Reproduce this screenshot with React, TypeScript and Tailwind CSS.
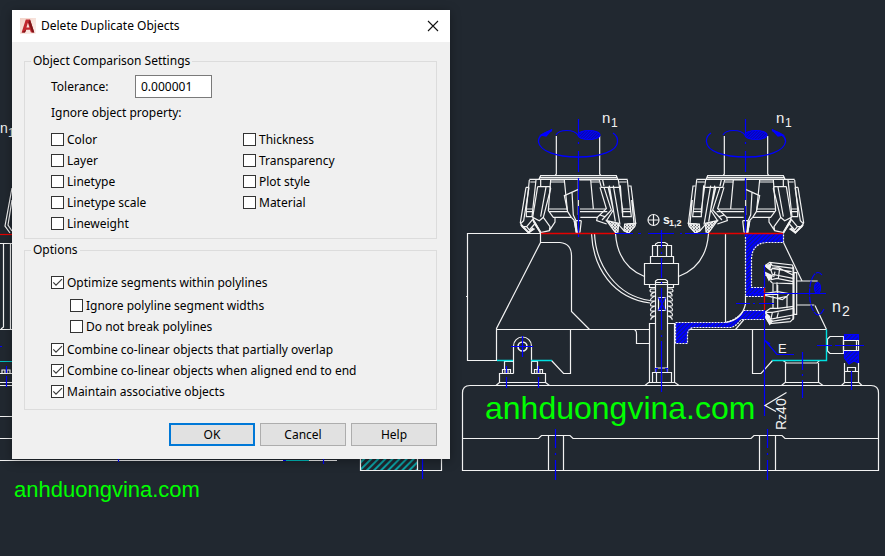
import { useState } from "react"
import type { ReactNode } from "react"

type CheckOptionProps = {
  label: string
  checked?: boolean
  nested?: boolean
}

const leftProperties = ["Color", "Layer", "Linetype", "Linetype scale", "Lineweight"]
const rightProperties = ["Thickness", "Transparency", "Plot style", "Material"]

function CheckOption({ label, checked = false, nested = false }: CheckOptionProps) {
  const [on, setOn] = useState(checked)

  return (
    <label className={nested ? "ml-[19px] flex h-[21px] items-center gap-[3px]" : "flex h-[21px] items-center gap-[3px]"}>
      <span className="grid size-[13px] shrink-0">
        <input
          type="checkbox"
          checked={on}
          onChange={(event) => setOn(event.target.checked)}
          className="peer col-start-1 row-start-1 size-[13px] appearance-none border border-[#333] bg-white"
        />
        <svg
          aria-hidden="true"
          viewBox="0 0 13 13"
          className="pointer-events-none invisible col-start-1 row-start-1 size-[13px] peer-checked:visible"
        >
          <path d="M2.3 6.4 5 9.2 11 3.2" fill="none" stroke="#3a3a3a" strokeWidth="1.2" />
        </svg>
      </span>
      <span className="whitespace-nowrap">{label}</span>
    </label>
  )
}

function Group({ title, children }: { title: string; children: ReactNode }) {
  return (
    <fieldset className="min-w-0 border border-[#dcdcdc]">
      <legend className="ml-1.5 px-0.5 leading-4">{title}</legend>
      {children}
    </fieldset>
  )
}

function AppLogo() {
  return (
    <svg aria-hidden="true" viewBox="0 0 16 16" className="size-4">
      <defs>
        <linearGradient id="logo-bg" x1="0" y1="0" x2="1" y2="1">
          <stop offset="0" stopColor="#f3d3c8" />
          <stop offset="1" stopColor="#fbf1ee" />
        </linearGradient>
      </defs>
      <rect width="16" height="16" fill="url(#logo-bg)" />
      <path d="M1.6 14.4 5.8 1.6H10l4.3 12.8h-3.4l-.9-2.6H6.2l-1.2 2.6z" fill="#c1272d" />
      <path d="M7.9 4.8 6.4 9.4h3z" fill="#f7e1da" />
      <path d="M1.6 14.4 6.2 11.8 5 14.4zM10 1.6l4.3 12.8h-2L8.4 4.2z" fill="#7d1518" />
    </svg>
  )
}

// Milling head seen from the front, drawn at three units per screen unit.
function MillingHead() {
  return (
    <g transform="translate(500 100) scale(.33333)" strokeWidth="3.6">
      <path d="M169 108V222L165 227M299 108V222L303 227" />
      <path d="M117 237 122 227H349L353 237M118 233H353M88 238H383" />
      <path d="M88 240 79 328V350H98M108 240 96 350M91 246H106" />
      <path d="M78 262H87M78 262 61 368 66 380 86 398 104 386M87 262 71 362 61 372M66 380 80 380 98 358M80 380 88 390 104 372" />
      <path d="M79 327H98M79 335H97" />
      <path d="M113 260H150L152 266 130 352 118 362 98 352 113 260M138 261 122 350M98 352 104 372 122 398M104 366 122 398 148 392 165 366V352M130 352 150 380 148 392" />
      <path d="M122 240V259M152 240H193L202 330M153 246H192M152 240 145 332 160 352H213M145 327H200M148 335H202" />
      <path d="M235 268 193 287 203 335 214 352 222 360 229 398 240 396 244 362M216 276 220 345 228 362H244M228 362 231 396M235 240V345" />
      <path d="M238 240H298M273 246H298M272 240 280 326M240 327H318M240 335H322M241 352H292" />
      <path d="M298 240 304 262H360M300 262 319 326 292 352 290 362 320 372M312 262 334 330 306 360M324 260 340 330 318 364M300 345 314 350M340 257 360 374M328 257 346 365" />
      <path d="M308 240 312 258M355 240 368 328V350H394L382 240M358 246H380M368 327H392M368 335H393M361 256 367 340" />
      <path d="M385 258H393L407 370 404 378 386 398 372 392 356 374M395 300 402 370M382 372 407 370" />
      <path d="M320 362 356 370 354 396 346 398zM374 372 407 370 404 380 386 399 372 392z" fill="url(#grit)" />
      <path d="M63 374 86 398 100 384M98 358 122 398M224 362 230 398" strokeWidth="6" />
    </g>
  )
}

function SideMillingHead() {
  return (
    <g transform="translate(665 225) scale(.33333)" strokeWidth="3.6">
      <path d="M387 143H395V268H387zM384 125V285M395 168H458M395 240H448" />
      <path d="M300 122 314 112 382 120 386 130V160H378M314 112 322 122 386 130M320 130 380 140M300 122 318 136 322 130 340 128 384 150M318 136 322 148 384 160" />
      <path d="M300 150 320 156 318 164 336 160 384 170M316 168 322 174 384 176M336 172V200M324 174V200M330 140 326 156M344 130 340 160" />
      <path d="M300 205 338 200 372 206 366 214 338 220 300 211M300 208H338M338 180V250M338 220 352 224 366 214M324 212V250M366 214V250" />
      <path d="M300 262 316 250 338 250 386 244M300 262 322 262 386 250M304 270 318 282 384 270M322 262 318 282M300 276 314 296 376 290 386 280V250M316 290 376 280M340 262 336 278" />
      <path d="M300 122 318 118 314 134zM300 142 322 152 312 166zM300 262 314 274 310 282zM300 272 322 288 314 298z" fill="currentColor" />
    </g>
  )
}

function ShaftRotation() {
  return (
    <g stroke="#0000ff" strokeWidth="1.3">
      <path d="M552 130.500C542 133 538 137 538.500 142 540 151 556 157 578 157 601 157 617 151 617.500 142 618 138 616 135 613 133" />
      <path d="M541 135 552 129.500 546 136z" fill="#0000ff" />
    </g>
  )
}

function ShaftBreak({ x }: { x: number }) {
  return (
    <g transform={`translate(${x} 0)`} stroke="#0000ff">
      <path d="M-22 135C-19 129-4 129 0 135" />
      <ellipse cx="11" cy="135" rx="11" ry="4.500" fill="url(#hatch-shaft)" />
      <path d="M.5 119V133M.5 142V144M.5 151V172M.5 178V200M.5 206V237" />
    </g>
  )
}

function Drawing() {
  return (
    <svg
      aria-hidden="true"
      viewBox="0 0 885 556"
      preserveAspectRatio="xMinYMin slice"
      className="absolute inset-0 h-full w-full text-[#f2f2f2]"
      fill="none"
      stroke="currentColor"
      strokeWidth="1.2"
    >
      <defs>
        <pattern id="hatch-shaft" width="2" height="2" patternUnits="userSpaceOnUse" patternTransform="rotate(45)">
          <rect width="2" height="2" fill="#0a0aa0" stroke="none" />
          <path d="M.5 0V2" stroke="#0000ff" strokeWidth="1" />
        </pattern>
        <pattern id="hatch-blue" width="3" height="3" patternUnits="userSpaceOnUse" patternTransform="rotate(45)">
          <rect width="3" height="3" fill="#10188c" stroke="none" />
          <path d="M1 0V3" stroke="#0000ff" strokeWidth="2" />
        </pattern>
        <pattern id="hatch-cyan" width="5" height="5" patternUnits="userSpaceOnUse" patternTransform="rotate(45)">
          <path d="M2 0V5" stroke="#00e5e5" strokeWidth="1.3" />
        </pattern>
        <pattern id="grit" width="9" height="9" patternUnits="userSpaceOnUse">
          <rect width="9" height="9" fill="#f2f2f2" stroke="none" />
          <path d="M1 1H4V4H1zM6 5H9V8H6z" fill="#212830" stroke="none" />
        </pattern>
      </defs>

      {/* bed */}
      <path d="M462.500 470.500V393Q462.500 385.500 470 385.500H871Q878.500 385.500 878.500 393V470.500z" />
      <path d="M462.500 438.500H538.500L541.500 435.500H570L573 438.500H751L754 435.500H782L785 438.500H878.500" />
      <path d="M548.500 435.500V470.500M563.500 435.500V470.500M759.500 435.500V470.500M775.500 435.500V470.500" />

      {/* left pedestal */}
      <path d="M541 233.500H467.500V360.500H497M466 296.500H468M540.500 233.500V242.500L496.500 328.500V360.500" />
      <path d="M540.500 242.500H560Q571.500 243.500 571.500 256V311.500L589.500 329.500M496.500 329.500H649.500" />
      <path d="M570.500 329.500V373.500H563.500L551.500 360.500M634 329.500Q636.500 330 636.500 334V343.500H649.500" />
      <path d="M513.500 373.500V346A9 9 0 0 1 531.500 346V373.500M504.500 369V361.500H513.500M531.500 361.500H537.500V369" />
      <circle cx="522.500" cy="346.500" r="4.500" strokeWidth="1.6" />
      <path d="M502.500 369.500H510.500V373.500H502.500zM505 369V373M508 369V373M534.500 369.500H542.500V373.500H534.500zM537 369V373M540 369V373" />
      <path d="M513.500 373.500H499.500V382.500L496 385.500M531.500 373.500H545.500V382.500L549.500 385.500M499.500 382.500H545.500" />

      {/* ribs */}
      <path d="M591.500 233.500C593 268 613 298 650 303M594.500 233.500C596 266 617 296 650 300.500" />
      <path d="M615.500 233.500C617 256 628 270 644.500 276.500M708.500 233.500C707 256 696 270 678.500 276.500M725.500 233.500V322" />

      {/* clamping bolt */}
      <path d="M655.500 245.500V244L658 242.500H665L667.500 244V245.500M652.500 245.500H671.500V256.500H652.500zM657.500 246V256M666.500 246V256" />
      <path d="M650.500 256.500H673.500V263.500H650.500zM649.500 284.500H644.500V263.500H678.500V284.500H673.500M649.500 284.500V287.500H655M673.500 284.500V287.500H668M649.500 284.500H673.500" />
      <path d="M655.500 368V281L657.500 279.500H665.500L667.500 281V368zM655.500 282.500H667.500" />
      <path d="M655 289H651Q649 291 651 292H655Q650 294 651 296H655Q649 299 651 301H655Q649 303 651 306H655Q649 308 651 311H655Q649 313 651 316H655Q650 318 651 320" />
      <path d="M668 289H672Q674 291 672 292H668Q673 294 672 296H668Q674 299 672 301H668Q674 303 672 306H668Q674 308 672 311H668Q674 313 672 316H668Q673 318 672 320" />
      <path d="M658.500 297.500H665.500V310.500H658.500zM649.500 382V323.500H655M674.500 382V323.500H668M655.500 368V372M667.500 368V372" />
      <path d="M652.500 372.500H671.500V382.500H652.500zM656.500 373V382M661.500 373V382M645 385.500 648.500 382.500H675L679 385.500" />

      {/* sectioned bracket */}
      <path
        d="M745.500 233.500H783.500V242.500H766Q751.500 244 751.500 260V287.500H764.500V296.500H745.500z"
        fill="url(#hatch-blue)"
        strokeDasharray="2 1"
      />
      <path
        d="M743.500 310.500H764.500V319.500H741Q736 327 730 327.500H693Q687.500 329 687.500 335V343.500H675.500V322.500H725Q737 320 743.500 310.500z"
        fill="url(#hatch-blue)"
        strokeDasharray="2 1"
      />
      <path d="M745.500 296V304Q742 320 725.500 322.500M690 329.500H826.500M735.500 329.500 744 319.500" />
      <path d="M783.500 242.500 802 281M815 305.500 826.500 329.500M752.500 329.500V373.500H761L772.500 360.500" />
      <SideMillingHead />

      {/* support pad and side screw */}
      <path d="M783 360.500 786.500 363H817L819.500 360.500M785.500 363V382M818.500 363V382M781.500 385.500 785 382.500H819L823 385.500" />
      <path d="M843.500 336.500H830L827.500 339V351L830 353.500H843.500z" />
      <path d="M844.500 334.500H858.500V340.500H844.500zM844.500 350.500H858.500V363L854 361 849 364 844.500 358z" fill="url(#hatch-blue)" stroke="#0000ff" />
      <path d="M843.500 340.500H858.500V350.500H843.500zM856.500 341V350M844.500 363V382M858.500 363V382M847.500 371V367.500H855.500V371M844.500 371.500H858.500M841.500 385.500 844.500 382.500H859L862 385.500" />

      {/* milling heads, the right one is a mirror image */}
      <MillingHead />
      <ShaftRotation />
      <g transform="translate(1324 0) scale(-1 1)">
        <MillingHead />
        <ShaftRotation />
      </g>
      <ShaftBreak x={578} />
      <ShaftBreak x={745} />

      {/* cutting plane */}
      <path d="M541 233.500H615M709 233.500H783" stroke="#e60000" strokeWidth="1.4" />
      <path d="M764.500 288V310" stroke="#e60000" />
      <path d="M497 360.500H513M531 360.500H552M826.500 329.500V360.500H772" stroke="#00e0e0" strokeWidth="1.4" />

      {/* centre lines */}
      <g stroke="#0000ff">
        <path d="M615 233.500H633M638 233.500H641M648 233.500H674M680 233.500H682M685 233.500H708" />
        <path d="M661.500 230V248M661.500 252V254M661.500 258V278M661.500 282V284M661.500 288V330M661.500 335V337M661.500 341V392" />
        <path d="M658.500 297.500 665.500 310.500M665.500 297.500 658.500 310.500M655 368.500H658M665 368.500H668M656 369V372M667 369V372" />
        <path d="M555.500 429V448M555.500 453V455M555.500 460V480M767.500 429V448M767.500 453V455M767.500 460V480" />
        <path d="M511 346.500H533M522.500 336V357M506.500 366V373M506.500 377V388M538.500 366V373M538.500 377V388" />
        <path d="M764.500 265V288M764.500 310V416M764.500 340 777 354.500H794M764.500 340 770 344" />
        <path d="M748 293.500H826M736 303.500H750M753 303.500H755M759 303.500H774" />
        <path d="M802.500 352V370M802.500 374V376M802.500 380V398M817 345.500H832M835 345.500H864M851.500 371V390" />
        <path d="M822 275Q818 270 814 275C808 283 808 303 814 312Q819 319 824 309" strokeDasharray="7 1" />
        <ellipse cx="817.500" cy="288" rx="3" ry="5.500" fill="url(#hatch-shaft)" />
      </g>

      {/* parts that run under the dialog */}
      <path d="M12 188 5 226 10 233M12 200 8 225 12 231" />
      <path d="M0 243.500H12M0 329.500H12M3.500 244V327L1 329M10.500 244V329M0 382.500H12M0 385.500H12M0 416.500H12M0 438.500H12M2 373.500V370H5V373M7 373V370H10V373M0 373.500H12M0 460.500H337" />
      <path d="M0 234.500H12" stroke="#e60000" />
      <path d="M0 361.500H12M285 460.500H309" stroke="#00c0c0" />
      <path d="M0 346.500H2M6.500 366V373M6.500 376V387M118.500 459V462M283 460.500H286M323.500 459V464" stroke="#0000ff" />
      <path d="M360.500 455H417.500V470.500H360.500z" fill="url(#hatch-cyan)" />
      <path d="M417.500 470.500H441.500V455" />
      <path d="M422.500 459V479" stroke="#0000ff" />

      {/* annotations */}
      <circle cx="653.500" cy="220" r="5.500" />
      <path d="M648 220H659M653.500 214.500V225.500M786.500 392.500 765 405.500 776 411.500" />
      <g fill="currentColor" stroke="none" fontFamily="'Liberation Sans', Arial, sans-serif">
        <text x="602" y="123" fontSize="15">n</text>
        <text x="611" y="127" fontSize="12">1</text>
        <text x="776" y="123" fontSize="15">n</text>
        <text x="785" y="127" fontSize="12">1</text>
        <text x="832" y="312" fontSize="16">n</text>
        <text x="842" y="316" fontSize="14">2</text>
        <text x="0" y="133" fontSize="14">n</text>
        <text x="8" y="137" fontSize="12">1</text>
        <text x="663" y="224" fontSize="12" fontWeight="700">s</text>
        <text x="669" y="226" fontSize="9" fontWeight="700">1,2</text>
        <text x="778" y="353" fontSize="13">E</text>
        <text transform="translate(786 430) rotate(-90)" fontSize="14">
          R<tspan fontSize="12">z</tspan>40
        </text>
        <g fill="#00ff00">
          <text x="485" y="419" fontSize="32">anhduongvina.com</text>
          <text x="14" y="497" fontSize="22">anhduongvina.com</text>
        </g>
      </g>
    </svg>
  )
}

function DeleteDuplicatesDialog() {
  return (
    <section
      role="dialog"
      aria-labelledby="dialog-title"
      className="relative w-[438px] max-w-full bg-[#f0f0f0] shadow-[0_2px_10px_rgba(0,0,0,0.35)]"
    >
      <header className="flex h-8 items-center gap-[5px] bg-white pr-[11px] pl-2">
        <AppLogo />
        <h1 id="dialog-title" className="flex-1">
          Delete Duplicate Objects
        </h1>
        <button type="button" aria-label="Close">
          <svg viewBox="0 0 12 12" className="size-3">
            <path d="M1 1 11 11M11 1 1 11" fill="none" stroke="#111" strokeWidth="1.1" />
          </svg>
        </button>
      </header>

      <form className="pt-[11px] pr-[13px] pb-[13px] pl-3" onSubmit={(event) => event.preventDefault()}>
        <Group title="Object Comparison Settings">
          <div className="pt-1.5 pb-1 pl-[26px]">
            <div className="flex items-center">
              <label htmlFor="tolerance" className="w-[84px]">
                Tolerance:
              </label>
              <input
                id="tolerance"
                type="text"
                defaultValue="0.000001"
                className="h-[23px] w-[77px] border border-[#7a7a7a] bg-white px-[5px] outline-none"
              />
            </div>
            <p className="mt-[7px]">Ignore object property:</p>
            <div className="mt-2 grid grid-cols-[192px_1fr]">
              <div>
                {leftProperties.map((name) => (
                  <CheckOption key={name} label={name} />
                ))}
              </div>
              <div>
                {rightProperties.map((name) => (
                  <CheckOption key={name} label={name} />
                ))}
              </div>
            </div>
          </div>
        </Group>

        <div className="mt-[3px]">
          <Group title="Options">
            <div className="flex flex-col gap-0.5 pt-3.5 pb-[7px] pl-[26px]">
              <CheckOption label="Optimize segments within polylines" checked />
              <div>
                <CheckOption label="Ignore polyline segment widths" nested />
                <CheckOption label="Do not break polylines" nested />
              </div>
              <div>
                <CheckOption label="Combine co-linear objects that partially overlap" checked />
                <CheckOption label="Combine co-linear objects when aligned end to end" checked />
                <CheckOption label="Maintain associative objects" checked />
              </div>
            </div>
          </Group>
        </div>

        <div className="mt-[13px] flex justify-end gap-[5px]">
          <button type="submit" className="h-[23px] w-[86px] border-2 border-[#0078d7] bg-[#e1e1e1]">
            OK
          </button>
          <button type="button" className="h-[23px] w-[86px] border border-[#adadad] bg-[#e1e1e1]">
            Cancel
          </button>
          <button type="button" className="h-[23px] w-[86px] border border-[#adadad] bg-[#e1e1e1]">
            Help
          </button>
        </div>
      </form>
    </section>
  )
}

export default function App() {
  return (
    <main className="relative min-h-screen overflow-hidden bg-[#212830] pt-2.5 pl-3 font-['Noto_Sans',sans-serif] text-xs leading-4 text-black">
      <Drawing />
      <DeleteDuplicatesDialog />
    </main>
  )
}
